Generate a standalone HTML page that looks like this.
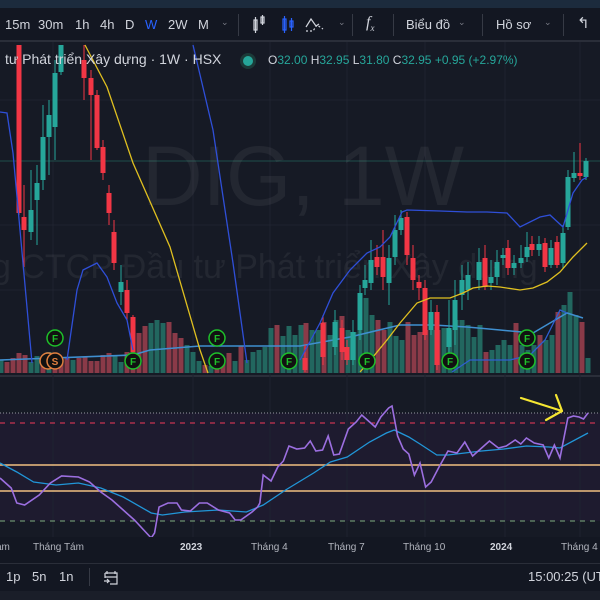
<!DOCTYPE html>
<html><head><meta charset="utf-8">
<style>
*{margin:0;padding:0;box-sizing:border-box}
body{width:600px;height:600px;overflow:hidden;background:#131722;font-family:"Liberation Sans",sans-serif;color:#d1d4dc;position:relative}
.top{position:absolute;left:0;top:0;width:600px;height:8px;background:#1c2b3d}
.tb{position:absolute;left:0;top:8px;width:600px;height:34px;background:#131722;border-bottom:2px solid #2a2e39}
.t{position:absolute;top:9px;font-size:13px;color:#d1d4dc;white-space:nowrap}
.sep{position:absolute;top:6px;width:1px;height:22px;background:#363a45}
.chev{position:absolute;top:9px;font-size:9px;color:#787b86}
.hdr{position:absolute;left:5px;top:51px;font-size:14px;color:#d1d4dc;white-space:nowrap}
.ohlc{position:absolute;left:268px;top:53px;font-size:12px;color:#d1d4dc;white-space:nowrap}
.ohlc span{color:#26a69a}
.ax{position:absolute;top:542px;font-size:10px;color:#b2b5be;white-space:nowrap}
.bb{position:absolute;left:0;top:563px;width:600px;height:28px;border-top:1px solid #2a2e39;background:#131722}
.bt{position:absolute;top:569px;font-size:13px;color:#d1d4dc;white-space:nowrap}
.bot{position:absolute;left:0;top:591px;width:600px;height:9px;background:#1a1e29}
</style></head><body>
<svg id="c" width="600" height="600" style="position:absolute;left:0;top:0" xmlns="http://www.w3.org/2000/svg">
<rect x="0" y="42" width="600" height="333" fill="#161a25"/>
<rect x="0" y="377" width="600" height="160" fill="#161a25"/>
<rect x="0" y="413" width="600" height="108" fill="#1e1b2f"/>
<rect x="0" y="375" width="600" height="2" fill="#2a2e39"/>
<g stroke="#1f2330" stroke-width="1">
<line x1="53" y1="42" x2="53" y2="537"/><line x1="193" y1="42" x2="193" y2="537"/><line x1="270" y1="42" x2="270" y2="537"/><line x1="347" y1="42" x2="347" y2="537"/><line x1="425" y1="42" x2="425" y2="537"/><line x1="505" y1="42" x2="505" y2="537"/><line x1="580" y1="42" x2="580" y2="537"/>
<line x1="0" y1="100" x2="600" y2="100"/><line x1="0" y1="225" x2="600" y2="225"/><line x1="0" y1="290" x2="600" y2="290"/>
</g>
<line x1="0" y1="161" x2="600" y2="161" stroke="#1f4d4a" stroke-width="1"/>
<text x="142" y="205" font-size="84" fill="#ffffff" fill-opacity="0.06" font-family="Liberation Sans">DIG, 1W</text>
<text x="-8" y="278" font-size="34" fill="#ffffff" fill-opacity="0.06" font-family="Liberation Sans">g CTCP Đầu tư Phát triển Xây dựng</text>
<g id="vol"></g>
<polyline fill="none" stroke="#3f8fd0" stroke-width="1.5" points="0,360 133,355 150,350 200,346 300,346 350,337 400,325 433,325 467,327 500,330 533,333 567,313 583,318"/>
<polyline fill="none" stroke="#2f5fd0" stroke-width="1.3" points="452,372 470,360 510,360 530,355 545,340 560,310 567,313"/>
<g id="cd"></g>
<g fill="none" stroke-width="1.3">
<polyline stroke="#2f4fd8" points="0,112 7,113 13,153 23,263 32,363"/>
<polyline stroke="#2f4fd8" points="67,360 77,290 83,270 97,263 107,277 117,303 127,320 133,350"/>
<polyline stroke="#2f4fd8" points="193,45 213,130 233,263 247,363"/>
<polyline stroke="#2f4fd8" points="300,360 320,323 333,293 350,270 367,253 380,247 390,237 402,212 407,210 440,211 467,212 487,212 507,213 520,227 540,217 550,215 563,227 573,193 582,180 587,177"/>
<polyline stroke="#e0c020" points="85,45 107,87 133,163 170,247 200,350 208,373"/>
<polyline stroke="#e0c020" points="360,372 368,363 387,340 400,323 417,303 430,298 450,298 463,293 473,288 487,286 500,287 520,290 533,288 547,282 560,272 573,257 587,243"/>
</g>
<g id="sig"></g>
<line x1="0" y1="413" x2="600" y2="413" stroke="#9598a1" stroke-width="1" stroke-dasharray="1,2"/>
<line x1="0" y1="423" x2="600" y2="423" stroke="#f23a5a" stroke-width="1" stroke-dasharray="5,5"/>
<line x1="0" y1="465" x2="600" y2="465" stroke="#f0c080" stroke-width="1.5"/>
<line x1="0" y1="491" x2="600" y2="491" stroke="#f0c080" stroke-width="1.5"/>
<line x1="0" y1="521" x2="600" y2="521" stroke="#7fae7f" stroke-width="1" stroke-dasharray="5,5"/>
<g transform="scale(1.12,1)">
<polyline fill="none" stroke="#2196d8" stroke-width="1.3" vector-effect="non-scaling-stroke" points="0,463 15,472 30,482 50,485 70,483 90,488 110,497 135,513 145,515 165,512 195,510 220,512 235,505 255,490 280,473 295,462 310,457 330,442 345,433 352,430 365,437 375,444 390,455 400,455 430,451 450,449 470,446 490,447 500,448 525,433"/>
<polyline fill="none" stroke="#9c6fe0" stroke-width="1.6" vector-effect="non-scaling-stroke" points="0,478 10,488 15,503 22,505 35,495 45,483 55,476 70,477 80,482 90,492 100,500 110,510 120,520 130,532 135,538 138,533 142,507 150,503 158,503 162,510 170,511 178,503 185,503 195,510 205,513 210,520 215,520 225,512 230,507 232,503 235,475 242,481 248,467 253,461 258,446 265,449 272,448 277,441 282,451 288,450 293,436 298,455 303,454 311,429 318,422 323,415 327,419 335,427 340,417 347,408 350,406 355,436 360,449 365,454 370,475 375,463 380,487 385,482 392,467 400,451 408,453 415,442 422,456 430,448 437,441 445,448 452,446 460,440 465,444 470,438 477,443 485,445 490,458 495,445 500,458 507,418 512,416 517,417 521,419 525,413"/>
</g>
<g stroke="#f5e632" stroke-width="2.2" fill="none" stroke-linecap="round" stroke-linejoin="round">
<line x1="521" y1="398" x2="562" y2="411"/><polyline points="556,395 562,411 546,420"/>
</g>
<rect x="0" y="537" width="600" height="26" fill="#131722"/>
</svg>
<div class="top"></div>
<div class="tb">
<span class="t" style="left:5px">15m</span><span class="t" style="left:38px">30m</span><span class="t" style="left:75px">1h</span><span class="t" style="left:100px">4h</span><span class="t" style="left:125px">D</span><span class="t" style="left:145px;color:#2962ff">W</span><span class="t" style="left:168px">2W</span><span class="t" style="left:198px">M</span>
<span class="chev" style="left:221px">⌄</span><div class="sep" style="left:238px"></div>
<svg style="position:absolute;left:251px;top:5px" width="90" height="24"><g stroke="#d1d4dc" fill="none" stroke-width="1.2"><rect x="3" y="7" width="3" height="10"/><line x1="4.5" y1="4" x2="4.5" y2="20"/><rect x="10" y="4" width="3" height="6"/><line x1="11.5" y1="2" x2="11.5" y2="12"/></g><g stroke="#2962ff" fill="none" stroke-width="1.2"><rect x="32" y="6" width="3" height="11"/><line x1="33.5" y1="3" x2="33.5" y2="20"/><rect x="39" y="8" width="3" height="6"/><line x1="40.5" y1="5" x2="40.5" y2="18"/></g><g stroke="#d1d4dc" fill="none" stroke-width="1.2"><polyline points="55,14 60,6 65,13 68,11"/><polyline stroke-dasharray="2,2" points="55,18 62,18 66,12 72,16"/></g></svg>
<span class="chev" style="left:338px">⌄</span><div class="sep" style="left:352px"></div>
<span class="t" style="left:366px;font-style:italic;font-family:'Liberation Serif',serif;font-size:16px;top:6px">f<sub style="font-size:9px">x</sub></span>
<div class="sep" style="left:393px"></div>
<span class="t" style="left:406px">Biểu đồ</span><span class="chev" style="left:458px">⌄</span><div class="sep" style="left:482px"></div>
<span class="t" style="left:496px">Hồ sơ</span><span class="chev" style="left:544px">⌄</span><div class="sep" style="left:563px"></div>
<span class="t" style="left:577px;font-size:15px;top:6px">↰</span>
</div>
<div class="hdr">tư Phát triển Xây dựng · 1W · HSX</div>
<div style="position:absolute;left:243px;top:56px;width:10px;height:10px;border-radius:50%;background:#26a69a;box-shadow:0 0 0 3px #1b3a38"></div>
<div class="ohlc">O<span>32.00</span> H<span>32.95</span> L<span>31.80</span> C<span>32.95</span> <span>+0.95 (+2.97%)</span></div>
<span class="ax" style="left:-4px">ám</span><span class="ax" style="left:33px">Tháng Tám</span><span class="ax" style="left:180px;font-weight:bold;color:#d1d4dc">2023</span><span class="ax" style="left:251px">Tháng 4</span><span class="ax" style="left:328px">Tháng 7</span><span class="ax" style="left:403px">Tháng 10</span><span class="ax" style="left:490px;font-weight:bold;color:#d1d4dc">2024</span><span class="ax" style="left:561px">Tháng 4</span>
<div class="bb"></div>
<span class="bt" style="left:6px">1p</span><span class="bt" style="left:32px">5n</span><span class="bt" style="left:59px">1n</span>
<div style="position:absolute;left:89px;top:568px;width:1px;height:18px;background:#363a45"></div>
<svg style="position:absolute;left:102px;top:568px" width="18" height="18"><g stroke="#d1d4dc" fill="none" stroke-width="1.2"><path d="M5 3v3M13 3v3M3 5h12v11H8M3 5v5M3 9h12M2 13h5l-2-2M7 13l-2 2"/></g></svg>
<span class="bt" style="left:528px">15:00:25 (UT</span>
<div class="bot"></div>
<script>
var NS="http://www.w3.org/2000/svg";
function el(p,t,a){var e=document.createElementNS(NS,t);for(var k in a)e.setAttribute(k,a[k]);p.appendChild(e);return e;}
var vol=document.getElementById('vol');
var L=[[1,360,'g'],[7,362,'r'],[13,358,'r'],[19,353,'r'],[25,355,'r'],[31,362,'g'],[37,356,'g'],[43,357,'r'],[49,352,'g'],[55,356,'r'],[61,360,'r'],[67,358,'r'],[73,360,'g'],[79,358,'r'],[85,357,'r'],[91,361,'r'],[97,361,'r'],[103,355,'r'],[109,353,'r'],[115,356,'g'],[121,362,'g'],[127,352,'r'],[133,345,'r'],[139,333,'r'],[145,326,'r'],[151,323,'g'],[157,320,'g'],[163,323,'g'],[169,322,'r'],[175,333,'r'],[181,338,'r'],[187,345,'g'],[193,352,'g'],[199,361,'g'],[205,365,'r'],[211,366,'g'],[217,360,'r'],[223,358,'r'],[229,353,'r'],[235,361,'g'],[241,346,'r'],[247,360,'g'],[253,352,'g'],[259,350,'g'],[265,347,'g'],[271,328,'g'],[277,325,'r'],[283,336,'g'],[289,326,'g'],[295,335,'g']];
var R=[[301,325,'g'],[306,323,'r'],[312,330,'g'],[318,330,'g'],[324,322,'r'],[330,335,'g'],[336,320,'g'],[342,316,'r'],[348,330,'g'],[354,332,'g'],[360,293,'g'],[366,298,'g'],[372,315,'g'],[378,320,'r'],[384,330,'r'],[390,322,'g'],[396,336,'g'],[402,340,'g'],[408,322,'r'],[414,335,'r'],[420,332,'r'],[426,330,'r'],[432,330,'g'],[438,330,'r'],[444,328,'g'],[450,330,'g'],[456,320,'g'],[462,320,'g'],[468,325,'g'],[474,337,'g'],[480,325,'g'],[486,352,'r'],[492,350,'g'],[498,345,'g'],[504,340,'g'],[510,345,'g'],[516,323,'r'],[522,345,'g'],[528,350,'g'],[534,345,'g'],[540,335,'r'],[546,340,'g'],[552,335,'g'],[558,312,'r'],[564,305,'g'],[570,292,'g'],[576,315,'g'],[582,322,'r'],[588,358,'g']];
L.concat(R).forEach(function(v){el(vol,'rect',{x:v[0]-2.5,y:v[1],width:5,height:373-v[1],fill:v[2]=='g'?'#22675f':'#8a3a48'});});
var cd=document.getElementById('cd');
var C=[[19,45,213,45,215,'r'],[24,217,230,185,267,'r'],[31,210,232,170,240,'g'],[37,183,200,165,245,'g'],[43,137,180,105,190,'g'],[49,115,137,100,175,'g'],[55,73,127,60,160,'g'],[61,45,72,45,75,'g'],[84,60,78,45,100,'r'],[91,78,95,70,160,'r'],[97,95,148,90,150,'r'],[103,147,173,140,180,'r'],[109,193,213,185,225,'r'],[114,232,263,220,270,'r'],[121,282,292,265,305,'g'],[127,290,313,280,320,'r'],[133,317,352,315,360,'r'],
[305,358,370,345,372,'r'],[323,323,357,315,365,'r'],[335,322,347,310,355,'g'],[342,328,352,320,360,'r'],[347,347,360,340,365,'r'],[353,332,360,320,365,'g'],[360,293,330,285,340,'g'],[365,280,288,265,295,'g'],[371,260,283,240,290,'g'],[377,257,267,245,275,'r'],[383,257,277,230,290,'r'],[389,258,283,245,305,'g'],[395,230,257,215,265,'g'],[401,218,230,210,235,'g'],[407,217,255,212,265,'r'],[413,258,280,245,290,'r'],[419,282,288,275,300,'r'],[425,288,335,280,340,'r'],[431,312,330,300,335,'g'],[437,312,365,305,370,'r'],[449,328,347,300,355,'g'],[455,300,330,280,345,'g'],[462,280,295,265,310,'g'],[468,275,290,262,300,'g'],[479,262,280,248,290,'g'],[485,258,287,245,290,'r'],[491,277,283,260,290,'g'],[497,262,277,250,285,'g'],[503,255,258,248,265,'g'],[508,248,268,240,275,'r'],[514,263,268,255,275,'g'],[521,258,263,245,268,'g'],[527,247,257,232,262,'g'],[532,244,250,236,256,'r'],[539,244,250,236,256,'g'],[545,243,267,238,272,'r'],[551,248,265,240,268,'g'],[557,242,265,236,268,'r'],[563,233,263,225,268,'g'],[568,177,227,170,230,'g'],[574,173,178,152,182,'g'],[580,173,176,143,180,'r'],[586,161,177,158,180,'g']];
C.forEach(function(c){var col=c[5]=='g'?'#26a69a':'#f23645';el(cd,'line',{x1:c[0],x2:c[0],y1:c[3],y2:c[4],stroke:col,'stroke-width':1});el(cd,'rect',{x:c[0]-2.5,y:c[1],width:5,height:Math.max(2,c[2]-c[1]),fill:col});});
var sig=document.getElementById('sig');
function circ(x,y,t,col){el(sig,'circle',{cx:x,cy:y,r:8,fill:'#111',stroke:col,'stroke-width':1.5});var tx=el(sig,'text',{x:x,y:y+4,'text-anchor':'middle','font-size':10,'font-weight':'bold',fill:col,'font-family':'Liberation Sans'});tx.textContent=t;}
circ(48,361,'','#e08040');
[[55,338,'F'],[133,361,'F'],[217,338,'F'],[217,361,'F'],[289,361,'F'],[367,361,'F'],[450,361,'F'],[527,338,'F'],[527,361,'F']].forEach(function(a){circ(a[0],a[1],a[2],'#1ec02a');});
circ(55,361,'S','#e08040');
</script>
</body></html>
